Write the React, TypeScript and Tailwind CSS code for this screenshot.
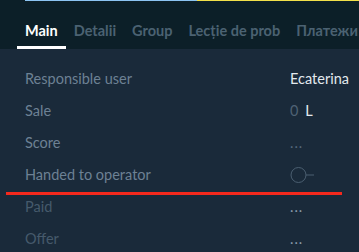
import React from 'react';

const tabs = ['Main', 'Detalii', 'Group', 'Lecție de prob', 'Платежи'];

type Row = { label: string; dim?: boolean; value: React.ReactNode };

const Dots = ({ light }: { light?: boolean }) => (
  <span className={light ? 'text-[#8a9bab] tracking-[1px]' : 'text-[#55687a] tracking-[1px]'}>...</span>
);

const Toggle = () => (
  <svg width="28" height="18" viewBox="0 0 28 18" className="block">
    <circle cx="8.5" cy="9" r="7.5" fill="none" stroke="#4b5f71" strokeWidth="1" />
    <line x1="16" y1="9" x2="24" y2="9" stroke="#4b5f71" strokeWidth="1" />
  </svg>
);

const rows: Row[] = [
  { label: 'Responsible user', value: <span className="text-[#e3e9ee]">Ecaterina</span> },
  {
    label: 'Sale',
    value: (
      <span>
        <span className="text-[#4f6274]">0</span> <span className="text-[#e3e9ee] ml-[3px]">L</span>
      </span>
    ),
  },
  { label: 'Score', value: <Dots /> },
  { label: 'Handed to operator', value: <Toggle /> },
  { label: 'Paid', dim: true, value: <Dots light /> },
  { label: 'Offer', dim: true, value: <Dots light /> },
];

export default function App() {
  return (
    <div className="relative w-[359px] h-[252px] overflow-hidden bg-[#1a2a3a] font-['Lato','Noto_Sans',sans-serif]">
      {/* Header */}
      <div className="relative h-[49px] bg-[#0c1f28]">
        <div className="flex h-px">
          <div className="w-[25px] bg-[#0c1f28]" />
          <div className="w-[172px] bg-[#8cc4f2]" />
          <div className="flex-1 bg-[#f2e04a]" />
        </div>
        <div className="flex pl-[17px] h-[48px]">
          {tabs.map((t, i) => (
            <div
              key={t}
              className={
                i === 0
                  ? 'px-2 pt-[19px] border-b-[3px] border-white text-white text-[14.5px] font-bold whitespace-nowrap'
                  : 'px-2 pt-[19px] text-[#4b6272] text-[14.5px] font-bold whitespace-nowrap'
              }
            >
              {t}
            </div>
          ))}
        </div>
      </div>

      {/* Body */}
      <div className="pt-[14px] pl-[25px]">
        {rows.map((r) => (
          <div key={r.label} className="flex items-center h-[32px] text-[14.5px]">
            <div className={r.dim ? 'flex-1 text-[#465a6c]' : 'flex-1 text-[#6d8194]'}>{r.label}</div>
            <div className="w-[69px] flex items-center">{r.value}</div>
          </div>
        ))}
      </div>

      {/* Annotation line */}
      <div className="absolute left-[6px] top-[192px] w-[336px] h-[3px] bg-[#f5291d]" />
    </div>
  );
}
